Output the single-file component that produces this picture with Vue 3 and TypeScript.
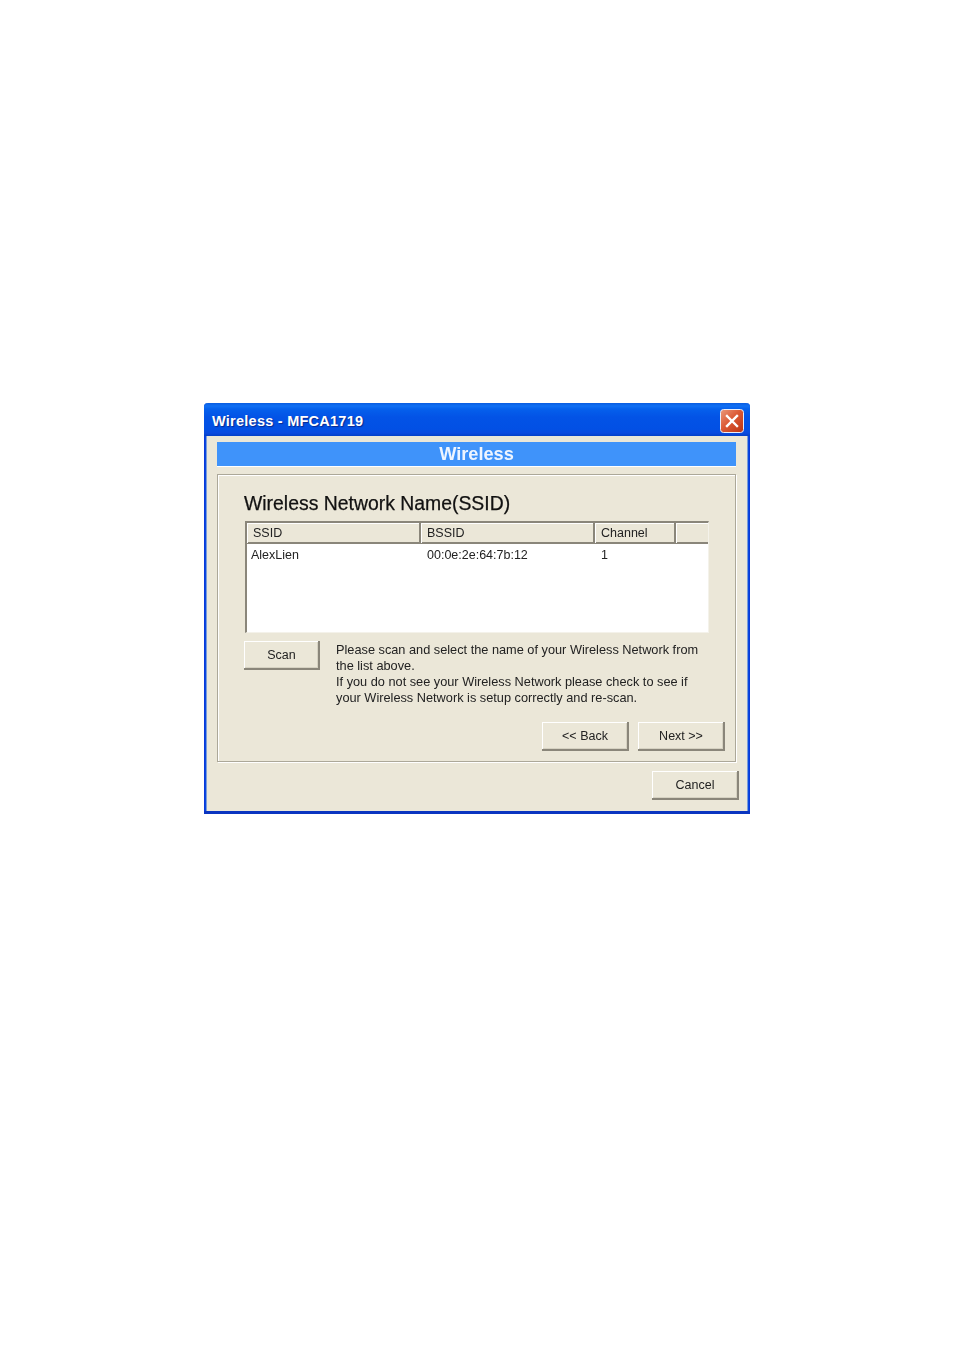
<script setup lang="ts">
interface Net { ssid: string; bssid: string; channel: string }
const nets: Net[] = [{ ssid: 'AlexLien', bssid: '00:0e:2e:64:7b:12', channel: '1' }]
const columns = ['SSID', 'BSSID', 'Channel', '']
</script>

<template>
  <div class="page">
    <div class="window">
      <div class="titlebar">
        <span class="title">Wireless - MFCA1719</span>
        <span class="close">
          <svg width="24" height="24" viewBox="0 0 24 24">
            <defs>
              <linearGradient id="cg" x1="0" y1="0" x2="1" y2="1">
                <stop offset="0" stop-color="#ea9a7c" />
                <stop offset="0.45" stop-color="#dc5a36" />
                <stop offset="1" stop-color="#bb3312" />
              </linearGradient>
            </defs>
            <rect x="0.5" y="0.5" width="23" height="23" rx="3" fill="url(#cg)" stroke="#e8eefb" />
            <path d="M7 7 L17 17 M17 7 L7 17" stroke="#fff" stroke-width="2.4" stroke-linecap="square" />
          </svg>
        </span>
      </div>
      <div class="client">
        <div class="banner">Wireless</div>
        <div class="group">
          <h1 class="heading">Wireless Network Name(SSID)</h1>
          <div class="list">
            <div class="list-head">
              <div v-for="c in columns" :key="c" class="col-head">{{ c }}</div>
            </div>
            <div v-for="n in nets" :key="n.ssid" class="row">
              <div class="cell c1">{{ n.ssid }}</div>
              <div class="cell c2">{{ n.bssid }}</div>
              <div class="cell c3">{{ n.channel }}</div>
            </div>
          </div>
          <div class="scan-row">
            <button class="btn scan">Scan</button>
            <p class="help">
              Please scan and select the name of your Wireless Network from<br />
              the list above.<br />
              If you do not see your Wireless Network please check to see if<br />
              your Wireless Network is setup correctly and re-scan.
            </p>
          </div>
          <div class="nav-row">
            <button class="btn">&lt;&lt; Back</button>
            <button class="btn">Next &gt;&gt;</button>
          </div>
        </div>
        <div class="cancel-row">
          <button class="btn">Cancel</button>
        </div>
      </div>
    </div>
  </div>
</template>

<style>
html, body { background: #fff; }
</style>

<style scoped>
.page {
  width: 954px;
  height: 1350px;
  padding: 403px 0 0 204px;
  box-sizing: border-box;
  background: #fff;
  font-family: "Liberation Sans", Arial, sans-serif;
  color: #222;
}
.window {
  width: 546px;
  height: 411px;
  box-sizing: border-box;
  display: flex;
  flex-direction: column;
  background: linear-gradient(90deg, #0831d9 0, #0a50e0 2px, #ebe7d8 3px, #ebe7d8 calc(100% - 3px), #0a50e0 calc(100% - 2px), #0831d9 100%);
  border-bottom: 3px solid #0a35c0;
  border-radius: 4px 4px 0 0;
  overflow: hidden;
  filter: blur(0.3px);
}
.titlebar {
  height: 33px;
  flex: none;
  display: flex;
  align-items: center;
  justify-content: space-between;
  padding: 3px 6px 0 8px;
  box-sizing: border-box;
  background: linear-gradient(180deg, #0a5ce0 0, #1070f4 3px, #0560ec 6px, #0353e6 14px, #0250e4 26px, #0a4adf 30px, #0340c8 33px);
}
.title {
  color: #fff;
  font-weight: 700;
  font-size: 14.5px;
  letter-spacing: 0.25px;
  text-shadow: 1px 1px 1px #0a2a90;
}
.close { display: flex; }
.client {
  flex: 1;
  display: flex;
  flex-direction: column;
  padding: 6px 14px 0 13px;
}
.banner {
  flex: none;
  background: #3f93fa;
  color: #eef5ff;
  font-weight: 700;
  font-size: 18.2px;
  line-height: 25px;
  text-align: center;
  border-bottom: 1px solid #fff;
  box-sizing: border-box;
  height: 25px;
}
.group {
  margin-top: 7px;
  height: 288px;
  flex: none;
  box-sizing: border-box;
  border: 1px solid #aca899;
  box-shadow: inset 1px 1px 0 #fff, 1px 1px 0 #fff;
  padding: 17px 25px 0 26px;
}
.heading {
  margin: 0;
  font-size: 19.4px;
  line-height: 22px;
  font-weight: 400;
  color: #111;
  -webkit-text-stroke: 0.25px #111;
}
.list {
  margin-top: 7px;
  margin-left: 1px;
  width: 464px;
  height: 112px;
  box-sizing: border-box;
  background: #fff;
  border-left: 2px solid #8a867a;
  border-top: 2px solid #8a867a;
  border-right: 1px solid #f4f2ea;
  border-bottom: 1px solid #f4f2ea;
}
.list-head {
  display: grid;
  grid-template-columns: 174px 174px 81px 1fr;
  height: 19px;
  background: #ebe7d8;
  border-bottom: 2px solid #8a867a;
  box-sizing: content-box;
}
.col-head {
  padding-left: 6px;
  font-size: 12.5px;
  line-height: 20px;
  border-right: 2px solid #8a867a;
  box-shadow: inset 1px 1px 0 #fff;
}
.col-head:last-child { border-right: 0; }
.row {
  display: grid;
  grid-template-columns: 174px 174px 81px;
  font-size: 12.5px;
  line-height: 23px;
}
.cell { padding-left: 6px; }
.c1 { padding-left: 4px; }
.scan-row {
  margin-top: 8px;
  display: flex;
  align-items: flex-start;
}
.btn {
  width: 87px;
  height: 29px;
  flex: none;
  padding: 1px 0 0 1px;
  margin: 0;
  font-family: inherit;
  font-size: 12.5px;
  color: #222;
  background: #ebe7d8;
  border: 0;
  border-radius: 0;
  border-right: 2px solid #8a867a;
  border-bottom: 2px solid #8a867a;
  box-shadow: inset 1px 1px 0 #fff, inset -1px -1px 0 #d6d2c2;
}
.scan { width: 76px; }
.help {
  margin: 0.6px 0 0 16px;
  font-size: 12.75px;
  line-height: 16.3px;
  white-space: nowrap;
}
.nav-row {
  margin-top: 15.4px;
  display: flex;
  justify-content: flex-end;
  gap: 9px;
  margin-right: -15px;
}
.cancel-row {
  margin-top: 9px;
  display: flex;
  justify-content: flex-end;
  margin-right: -3px;
}
</style>
